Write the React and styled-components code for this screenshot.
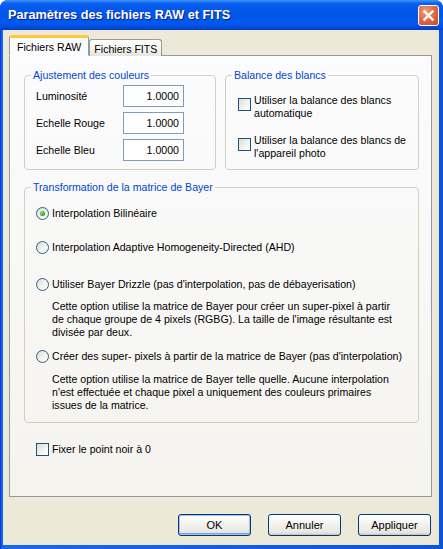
import styled, { createGlobalStyle } from 'styled-components';

const GlobalStyle = createGlobalStyle`
  html, body {
    margin: 0;
    padding: 0;
    background: #ffffff;
  }
  body {
    font-family: "Liberation Sans", Arial, sans-serif;
    font-size: 10.6px;
    color: #000;
  }
`;

const Window = styled.div`
  width: 443px;
  height: 549px;
  display: flex;
  flex-direction: column;
  background: linear-gradient(to right, #0831d9 0, #166aee 2px, #0855dd 100%);
  border-radius: 8px 8px 0 0;
  overflow: hidden;
`;

const TitleBar = styled.div`
  height: 30px;
  flex: none;
  display: flex;
  align-items: center;
  padding: 0 4px 0 8px;
  background: linear-gradient(
    to bottom,
    #3d95ff 0%,
    #0a5ef0 12%,
    #0055e5 45%,
    #0058ee 80%,
    #0049d8 92%,
    #003cc8 100%
  );
`;

const Title = styled.span`
  font-family: "Liberation Sans", Arial, sans-serif;
  font-weight: bold;
  font-size: 12.7px;
  color: #fff;
  text-shadow: 1px 1px 0 #0a1e8a;
`;

const CloseButton = styled.div`
  margin-left: auto;
  width: 21px;
  height: 21px;
  box-sizing: border-box;
  border: 1px solid #fff;
  border-radius: 3px;
  display: flex;
  align-items: center;
  justify-content: center;
  background: radial-gradient(circle at 35% 30%, #f0a184 0%, #e3714f 40%, #c94426 100%);
`;

const Body = styled.div`
  flex: 1;
  margin: 0 4px 4px 3px;
  background: #ece9d8;
  display: flex;
  flex-direction: column;
  padding: 5px 7px 9px 6px;
`;

const TabStrip = styled.div`
  display: flex;
  align-items: flex-end;
  margin-bottom: -1px;
  position: relative;
  z-index: 1;
`;

const Tab = styled.div`
  box-sizing: border-box;
  height: ${(p) => (p.$active ? '21px' : '17px')};
  padding: 0 ${(p) => (p.$active ? '7px' : '4px')};
  display: flex;
  align-items: center;
  border: 1px solid #919b9c;
  border-bottom: ${(p) => (p.$active ? '1px solid #fcfcfe' : 'none')};
  border-top: ${(p) => (p.$active ? '3px solid #ffc83c' : '1px solid #919b9c')};
  border-radius: 3px 3px 0 0;
  background: ${(p) =>
    p.$active ? '#fcfcfe' : 'linear-gradient(to bottom, #ffffff, #f3f2ee 60%, #e4e3dc)'};
  padding-top: ${(p) => (p.$active ? '0' : '1px')};
`;

const Panel = styled.div`
  flex: 1;
  border: 1px solid #919b9c;
  background: linear-gradient(to bottom, #fcfcfe, #f4f3ee);
  padding: 13px 12px 0 14px;
  display: flex;
  flex-direction: column;
`;

const GroupRow = styled.div`
  display: flex;
  gap: 9px;
`;

const Group = styled.fieldset`
  margin: ${(p) => p.$top || 0}px 0 0;
  padding: 0 6px ${(p) => p.$bottom || 8}px;
  border: 1px solid #d0d0bf;
  border-radius: 4px;
  width: ${(p) => (p.$width ? `${p.$width}px` : 'auto')};
  box-sizing: border-box;
  flex: ${(p) => (p.$grow ? '1' : 'none')};
`;

const Legend = styled.legend`
  padding: 0 2px;
  color: #0046d5;
  line-height: 13px;
`;

const FieldRow = styled.div`
  display: flex;
  align-items: center;
  padding-left: 5px;
  margin-top: ${(p) => (p.$first ? '3px' : '5px')};
`;

const FieldLabel = styled.span`
  width: 87px;
`;

const NumberBox = styled.div`
  width: 61px;
  height: 22px;
  box-sizing: border-box;
  border: 1px solid #7f9db9;
  background: #fff;
  display: flex;
  align-items: center;
  justify-content: flex-end;
  padding-right: 4px;
`;

const CheckRow = styled.label`
  display: flex;
  align-items: flex-start;
  gap: 3px;
  line-height: 13px;
  margin-top: ${(p) => p.$top || 0}px;
  margin-left: ${(p) => p.$left || 0}px;
`;

const CheckBox = styled.span`
  flex: none;
  width: 13px;
  height: 13px;
  box-sizing: border-box;
  border: 1px solid #1c5180;
  background: linear-gradient(135deg, #dcdcd7 0%, #f4f4f0 60%, #ffffff 100%);
  margin-top: ${(p) => p.$offset || 0}px;
`;

const Radio = styled.span`
  flex: none;
  width: 13px;
  height: 13px;
  box-sizing: border-box;
  border-radius: 50%;
  border: 1px solid #2f5e8a;
  background: linear-gradient(135deg, #dcdcd7 0%, #f4f4f0 60%, #ffffff 100%);
  display: flex;
  align-items: center;
  justify-content: center;

  &::after {
    content: '';
    display: ${(p) => (p.$checked ? 'block' : 'none')};
    width: 5px;
    height: 5px;
    border-radius: 50%;
    background: radial-gradient(circle at 35% 35%, #8fe08f, #21a121 70%, #1a7a1a);
  }
`;

const Option = styled.div`
  padding-left: 5px;
  margin-top: ${(p) => p.$top}px;
`;

const OptionLine = styled.label`
  display: flex;
  align-items: center;
  gap: 3px;
  line-height: 13px;
  white-space: nowrap;
`;

const Description = styled.p`
  margin: ${(p) => p.$top || 9}px 0 0 16px;
  line-height: 13px;
  white-space: nowrap;
`;

const Footer = styled.div`
  display: flex;
  justify-content: flex-end;
  gap: 17px;
  margin-top: 17px;
  padding-right: 1px;
`;

const Button = styled.button`
  width: 73px;
  height: 22px;
  box-sizing: border-box;
  font-family: "Liberation Sans", Arial, sans-serif;
  font-size: 11px;
  color: #000;
  border: 1px solid #003c74;
  border-radius: 3px;
  background: linear-gradient(to bottom, #ffffff 0%, #f5f4f0 40%, #e9e7e0 85%, #d6d0c5 100%);
  box-shadow: ${(p) =>
    p.$default ? 'inset 0 0 0 1px #a4c0f2, inset 0 -1px 0 1px #7a9ee8' : 'inset 0 -1px 0 #cdc8bb'};
  padding: 0;
`;

const CloseIcon = () => (
  <svg width="13" height="13" viewBox="0 0 13 13">
    <path d="M2.5 2.5 L10.5 10.5 M10.5 2.5 L2.5 10.5" stroke="#fff" strokeWidth="2.4" strokeLinecap="square" />
  </svg>
);

const colourFields = [
  { label: 'Luminosité', value: '1.0000' },
  { label: 'Echelle Rouge', value: '1.0000' },
  { label: 'Echelle Bleu', value: '1.0000' },
];

export default function App() {
  return (
    <>
      <GlobalStyle />
      <Window>
        <TitleBar>
          <Title>Paramètres des fichiers RAW et FITS</Title>
          <CloseButton>
            <CloseIcon />
          </CloseButton>
        </TitleBar>
        <Body>
          <TabStrip>
            <Tab $active>Fichiers RAW</Tab>
            <Tab>Fichiers FITS</Tab>
          </TabStrip>
          <Panel>
            <GroupRow>
              <Group $width={192}>
                <Legend>Ajustement des couleurs</Legend>
                {colourFields.map((f, i) => (
                  <FieldRow key={f.label} $first={i === 0}>
                    <FieldLabel>{f.label}</FieldLabel>
                    <NumberBox>{f.value}</NumberBox>
                  </FieldRow>
                ))}
              </Group>
              <Group $grow>
                <Legend>Balance des blancs</Legend>
                <CheckRow $top={12} $left={6}>
                  <CheckBox $offset={4} />
                  <span>
                    Utiliser la balance des blancs
                    <br />
                    automatique
                  </span>
                </CheckRow>
                <CheckRow $top={14} $left={6}>
                  <CheckBox $offset={4} />
                  <span>
                    Utiliser la balance des blancs de
                    <br />
                    l'appareil photo
                  </span>
                </CheckRow>
              </Group>
            </GroupRow>

            <Group $top={11} $bottom={10}>
              <Legend>Transformation de la matrice de Bayer</Legend>
              <Option $top={13}>
                <OptionLine>
                  <Radio $checked />
                  Interpolation Bilinéaire
                </OptionLine>
              </Option>
              <Option $top={21}>
                <OptionLine>
                  <Radio />
                  Interpolation Adaptive Homogeneity-Directed (AHD)
                </OptionLine>
              </Option>
              <Option $top={24}>
                <OptionLine>
                  <Radio />
                  Utiliser Bayer Drizzle (pas d'interpolation, pas de débayerisation)
                </OptionLine>
                <Description>
                  Cette option utilise la matrice de Bayer pour créer un super-pixel à partir
                  <br />
                  de chaque groupe de 4 pixels (RGBG). La taille de l'image résultante est
                  <br />
                  divisée par deux.
                </Description>
              </Option>
              <Option $top={11}>
                <OptionLine>
                  <Radio />
                  Créer des super- pixels à partir de la matrice de Bayer (pas d'interpolation)
                </OptionLine>
                <Description $top={10}>
                  Cette option utilise la matrice de Bayer telle quelle. Aucune interpolation
                  <br />
                  n'est effectuée et chaque pixel a uniquement des couleurs primaires
                  <br />
                  issues de la matrice.
                </Description>
              </Option>
            </Group>

            <CheckRow $top={20} $left={12}>
              <CheckBox />
              <span>Fixer le point noir à 0</span>
            </CheckRow>
          </Panel>
          <Footer>
            <Button $default>OK</Button>
            <Button>Annuler</Button>
            <Button>Appliquer</Button>
          </Footer>
        </Body>
      </Window>
    </>
  );
}
